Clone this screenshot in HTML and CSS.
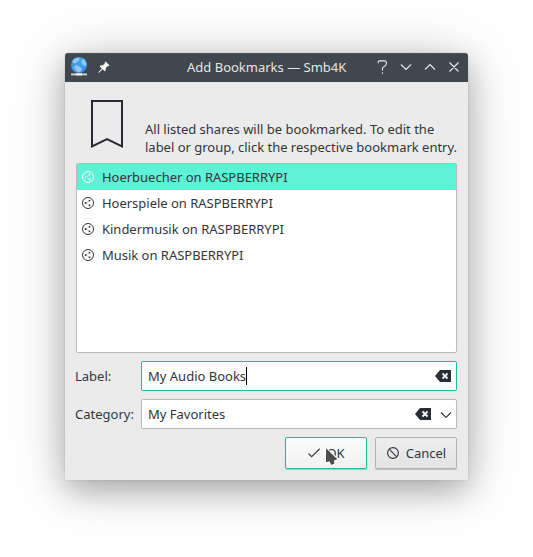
FILE: index.html
```html
<!DOCTYPE html>
<html lang="en">
<head>
<meta charset="utf-8">
<title>Add Bookmarks — Smb4K</title>
<link rel="stylesheet" href="styles.css">
</head>
<body>
<svg width="0" height="0" class="defs">
  <defs>
    <symbol id="share" viewBox="0 0 12 12">
      <circle cx="6" cy="6" r="5.5" fill="none" stroke="currentColor"/>
      <path d="M7.6 3.9 3.8 6l3.8 2.1" fill="none" stroke="currentColor" stroke-width=".25"/>
      <circle cx="3.6" cy="6" r=".9" fill="currentColor"/>
      <circle cx="7.5" cy="3.6" r=".9" fill="currentColor"/>
      <circle cx="7.5" cy="8.4" r=".9" fill="currentColor"/>
    </symbol>
    <symbol id="clear" viewBox="0 0 16 12">
      <path d="M0 6 5 0h11v12H5z" fill="#272c35"/>
      <path d="m7.5 3.5 5 5m0-5-5 5" stroke="#fff" stroke-width="1.8"/>
    </symbol>
  </defs>
</svg>
<main class="window">
  <header class="titlebar">
    <svg class="globe" width="16" height="20" viewBox="0 0 16 20">
      <defs><linearGradient id="sea" x2="1" y2="1"><stop stop-color="#2e80ca"/><stop offset=".5" stop-color="#4aa5ee"/><stop offset="1" stop-color="#2c80ed"/></linearGradient></defs>
      <circle cx="8" cy="8" r="8" fill="url(#sea)"/>
      <path d="M1.2 4.5 4 1.2 8 .4l.8 1.6L7.5 4 5 6 2.2 6.5zM3 9l3-.8 4 2.3 1 2-2 2.5-3-.2L4.2 12zM11 2.2l2.2.6 2 3.2.2 3-2 .2-1.7-1.8L10.5 6z" fill="#9ad0f9" opacity=".85"/>
      <path d="M0 16.4h16v2H0z" fill="#cbd0d2"/><path d="M5 16.4h6v2H5z" fill="#f4f4f4"/>
    </svg>
    <svg class="pin" width="12" height="12" viewBox="0 0 12 12"><path d="m7.6.4 4 4-1 .9-.8-.2-2.1 2.1.1 2.1-1.2 1-2-2L1 11.8l-.7.1.1-.7L3.7 7.4l-2-2 1-1.2 2.1.1L6.9 2.2l-.2-.8z" fill="#f2f2f2"/></svg>
    <h1>Add Bookmarks — Smb4K</h1>
    <svg class="controls" width="84" height="16" viewBox="0 0 84 16" fill="none" stroke="#e9ebec" stroke-width="1.1">
      <path d="M2.2 4.2V3.2q0-1.3 1.3-1.3h5.2q1.6 0 1.6 1.4v1.5q0 1.2-1 1.8L7.6 8q-1.1.6-1.1 1.7v1.8M6.5 13.2v1.5"/>
      <path d="m25 5.5 5 5 5-5M49 10.5l5-5 5 5M73.5 3.5l9 9m0-9-9 9"/>
    </svg>
  </header>
  <section class="intro">
    <svg class="ribbon" width="32" height="48" viewBox="0 0 32 48"><path d="M1 1h30v45.3L16 39 1 46.3z" fill="none" stroke="#272c33" stroke-width="2"/></svg>
    <p>All listed shares will be bookmarked. To edit the<br>label or group, click the respective bookmark entry.</p>
  </section>
  <ul class="list">
    <li class="selected"><svg width="12" height="12"><use href="#share"/></svg>Hoerbuecher on RASPBERRYPI</li>
    <li><svg width="12" height="12"><use href="#share"/></svg>Hoerspiele on RASPBERRYPI</li>
    <li><svg width="12" height="12"><use href="#share"/></svg>Kindermusik on RASPBERRYPI</li>
    <li><svg width="12" height="12"><use href="#share"/></svg>Musik on RASPBERRYPI</li>
  </ul>
  <div class="row">
    <span class="name">Label:</span>
    <div class="field focused"><span>My Audio Books</span><i class="caret"></i><svg class="clear" width="16" height="12"><use href="#clear"/></svg></div>
  </div>
  <div class="row">
    <span class="name">Category:</span>
    <div class="field"><span>My Favorites</span><svg class="clear" width="16" height="12"><use href="#clear"/></svg><svg class="drop" width="12" height="8" viewBox="0 0 12 8"><path d="m1 1.5 5 5 5-5" fill="none" stroke="#31363b" stroke-width="1.1"/></svg></div>
  </div>
  <footer class="actions">
    <div class="button ok"><svg width="12" height="10" viewBox="0 0 12 10"><path d="m.5 5.5 3.2 3.2L11.7.7" fill="none" stroke="#31363b" stroke-width="1.1"/></svg><span>OK</span>
      <svg class="pointer" width="16" height="22" viewBox="0 0 16 22"><path d="M2 2.3v14l3.6-1 1.6 3.8 3.2-1.5-.6-3 3.6-1.3z" fill="#4b4b4b" stroke="#fff" stroke-width="2" paint-order="stroke"/></svg>
    </div>
    <div class="button cancel"><svg width="12" height="12" viewBox="0 0 12 12"><g fill="none" stroke="#31363b" stroke-width="1.1"><circle cx="6" cy="6" r="5.4"/><path d="m2.2 2.2 7.6 7.6"/></g></svg><span>Cancel</span></div>
  </footer>
</main>
</body>
</html>
```

FILE: styles.css
```css
* { box-sizing: border-box; }
body {
  margin: 0;
  height: 557px;
  padding: 53px 65px 0;
  overflow: hidden;
  background: #fff;
  color: #31363b;
  font: 13px/18px "Noto Sans", sans-serif;
}
.defs { position: absolute; }
svg { display: block; flex: none; }
.window {
  width: 403px;
  height: 427px;
  border-radius: 3px 3px 1px 1px;
  background: #ebebeb;
  box-shadow: 0 0 2px rgba(0, 0, 0, .15), 0 11px 30px rgba(0, 0, 0, .24), 0 5px 60px rgba(0, 0, 0, .19);
}
.titlebar {
  display: flex;
  align-items: center;
  height: 29px;
  padding: 0 8px 2px 6px;
  border-radius: 3px 3px 0 0;
  background: #40474e;
  border-top: 1px solid #4c5359;
}
.pin { margin-left: 11px; }
h1 {
  margin: 0 0 0 77px;
  font-size: 13px;
  font-weight: 400;
  color: #e4e6e7;
  white-space: nowrap;
}
.controls { margin-left: auto; }
.intro {
  display: flex;
  height: 81px;
  padding: 18px 0 0 26px;
}
.intro p {
  margin: 20px 0 0 22px;
  letter-spacing: -.01px;
  white-space: nowrap;
}
.list {
  width: 381px;
  height: 190px;
  margin: 0 0 8px 11px;
  padding: 0;
  list-style: none;
  letter-spacing: -.02px;
  background: #fff;
  border: 1px solid #b9babb;
  border-radius: 2px;
}
.list li {
  display: flex;
  align-items: center;
  gap: 8px;
  height: 26px;
  padding-left: 5px;
}
.list .selected { background: #5ef1d5; }
.selected svg { color: #fff; }
.row {
  display: flex;
  align-items: center;
  margin: 0 11px 8px 10px;
}
.name { width: 66px; }
.field {
  display: flex;
  align-items: center;
  flex: 1;
  height: 30px;
  padding: 0 5px 0 6px;
  background: #fff;
  border: 1px solid #b9babb;
  border-radius: 2px;
}
.focused { border-color: #1abc9c; }
.caret { width: 1px; height: 18px; background: #000; }
.clear { margin-left: auto; }
.drop { margin: 1px -1px 0 9px; }
.actions {
  display: flex;
  justify-content: flex-end;
  gap: 8px;
  padding-right: 11px;
}
.button {
  position: relative;
  display: flex;
  align-items: center;
  justify-content: center;
  gap: 7px;
  width: 82px;
  height: 32px;
  border: 1px solid #b2b3b4;
  border-radius: 2px;
  background: linear-gradient(#eee, #e3e3e3);
  box-shadow: 0 1px 1px rgba(0, 0, 0, .2);
}
.ok { gap: 6px; padding-left: 1px; border-color: #1abc9c; background: linear-gradient(#fcfcfc, #f1f1f1); }
.cancel { padding-left: 1px; }
.pointer { position: absolute; left: 38px; top: 8px; }
```
